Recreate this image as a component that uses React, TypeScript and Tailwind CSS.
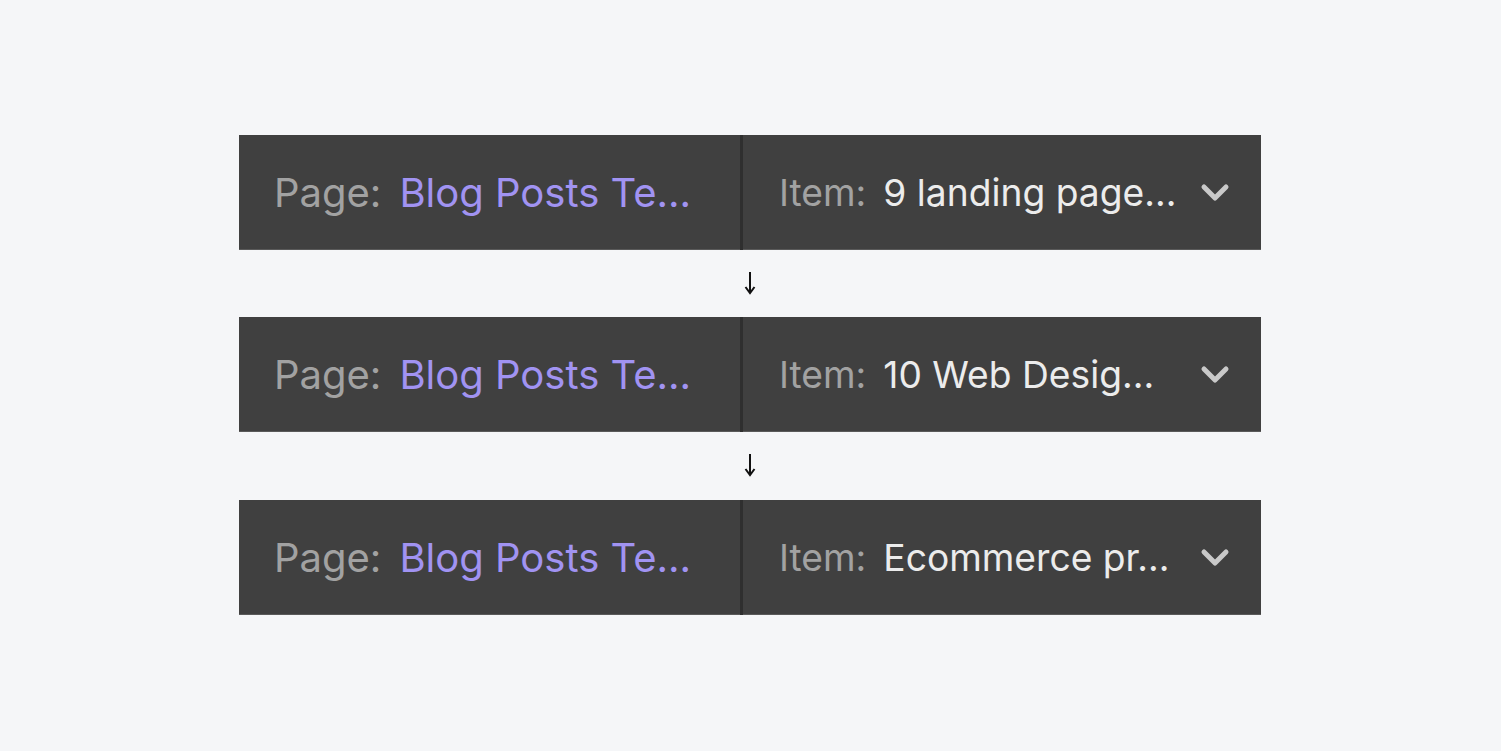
const rows = ["9 landing page...", "10 Web Desig...", "Ecommerce pr..."];

function Chevron() {
  return (
    <svg width="30" height="20" viewBox="0 0 30 20" className="shrink-0">
      <path
        d="M4 4 L15 15 L26 4"
        fill="none"
        stroke="#c9c9c9"
        strokeWidth="5"
        strokeLinecap="round"
        strokeLinejoin="round"
      />
    </svg>
  );
}

function DownArrow() {
  return (
    <svg width="12" height="24" viewBox="0 0 12 24">
      <path d="M6 1 V21" stroke="#111" strokeWidth="2" />
      <path d="M1.5 16 L6 22 L10.5 16" fill="none" stroke="#111" strokeWidth="2" />
    </svg>
  );
}

function Bar({ item }: { item: string }) {
  return (
    <div className="flex h-[115px] w-[1022px] whitespace-nowrap bg-[#404040] shadow-[inset_0_-1px_0_#5a5a5a]">
      <div className="flex w-[501px] items-center gap-[18px] pl-[35px] text-[40px]">
        <span className="text-[#a2a2a2]">Page:</span>
        <span className="text-[#a193f2]">Blog Posts Te...</span>
      </div>
      <div className="w-[3px] bg-[#2f2f2f]" />
      <div className="flex flex-1 items-center pl-[36px] pr-[31px] text-[37.2px]">
        <span className="text-[#a2a2a2]">Item:</span>
        <span className="ml-[17px] flex-1 text-[#ececec]">{item}</span>
        <Chevron />
      </div>
    </div>
  );
}

export default function App() {
  return (
    <div
      className="flex h-[751px] w-full flex-col items-start bg-[#f5f6f8] pl-[239px] pt-[135px] leading-none"
      style={{ fontFamily: "Inter, 'Noto Sans', sans-serif" }}
    >
      {rows.map((item, i) => (
        <div key={item} className="flex flex-col items-center">
          {i > 0 && (
            <div
              className={`flex items-center justify-center pb-[2px] ${
                i === 1 ? "h-[67px]" : "h-[68px]"
              }`}
            >
              <DownArrow />
            </div>
          )}
          <Bar item={item} />
        </div>
      ))}
    </div>
  );
}
